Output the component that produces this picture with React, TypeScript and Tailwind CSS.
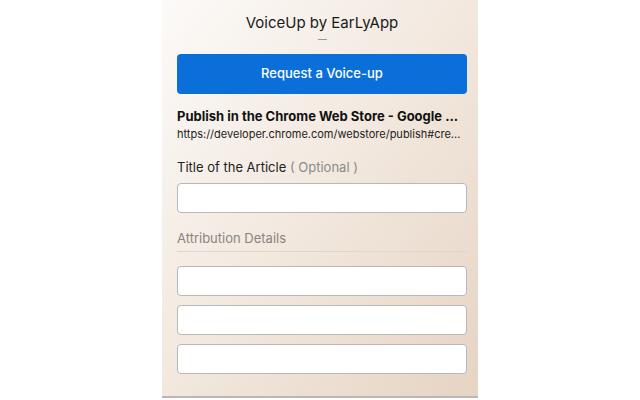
export default function App() {
  return (
    <div className="w-[640px] h-[400px] bg-white flex justify-center" style={{ fontFamily: 'Inter, "Noto Sans", sans-serif' }}>
      <div className="w-[316px] h-[398px] border-b-2 border-[#b9b6b3] bg-gradient-to-br from-[#fcfaf8] via-[#f2e8de] to-[#e6d4c4] pl-[15px] pr-[11px] flex flex-col">
        {/* Header */}
        <h1 className="mt-[13px] text-center text-[15px] leading-[20px] text-[#1a1a1a]">
          VoiceUp by EarLyApp
        </h1>
        <div className="mx-auto mt-[6px] w-[9px] h-px bg-[#9a9a9a]" />

        <button className="mt-[14px] h-[40px] w-full rounded-[4px] bg-[#0a6fd8] text-white text-[13px] font-medium">
          Request a Voice-up
        </button>

        {/* Page info */}
        <div className="mt-[14px] text-[13px] leading-[16px] font-bold text-[#111] whitespace-nowrap overflow-hidden">
          Publish in the Chrome Web Store - Google ...
        </div>
        <div className="mt-[2px] text-[11px] leading-[16px] text-[#222] whitespace-nowrap overflow-hidden">
          https://developer.chrome.com/webstore/publish#cre...
        </div>

        <label className="mt-[16px] text-[13px] leading-[18px] text-[#222]">
          Title of the Article <span className="text-[#8a8a8a]">( Optional )</span>
        </label>
        <input className="mt-[7px] h-[30px] w-full rounded-[4px] border border-[#b8b8b8] bg-white" />

        <div className="mt-[16px] pb-[4px] border-b border-[#e0d6cc] text-[13px] leading-[18px] text-[#8a8480]">
          Attribution Details
        </div>

        <div className="mt-[14px] flex flex-col gap-[9px]">
          <input className="h-[30px] w-full rounded-[4px] border border-[#b8b8b8] bg-white" />
          <input className="h-[30px] w-full rounded-[4px] border border-[#b8b8b8] bg-white" />
          <input className="h-[30px] w-full rounded-[4px] border border-[#b8b8b8] bg-white" />
        </div>
      </div>
    </div>
  );
}
